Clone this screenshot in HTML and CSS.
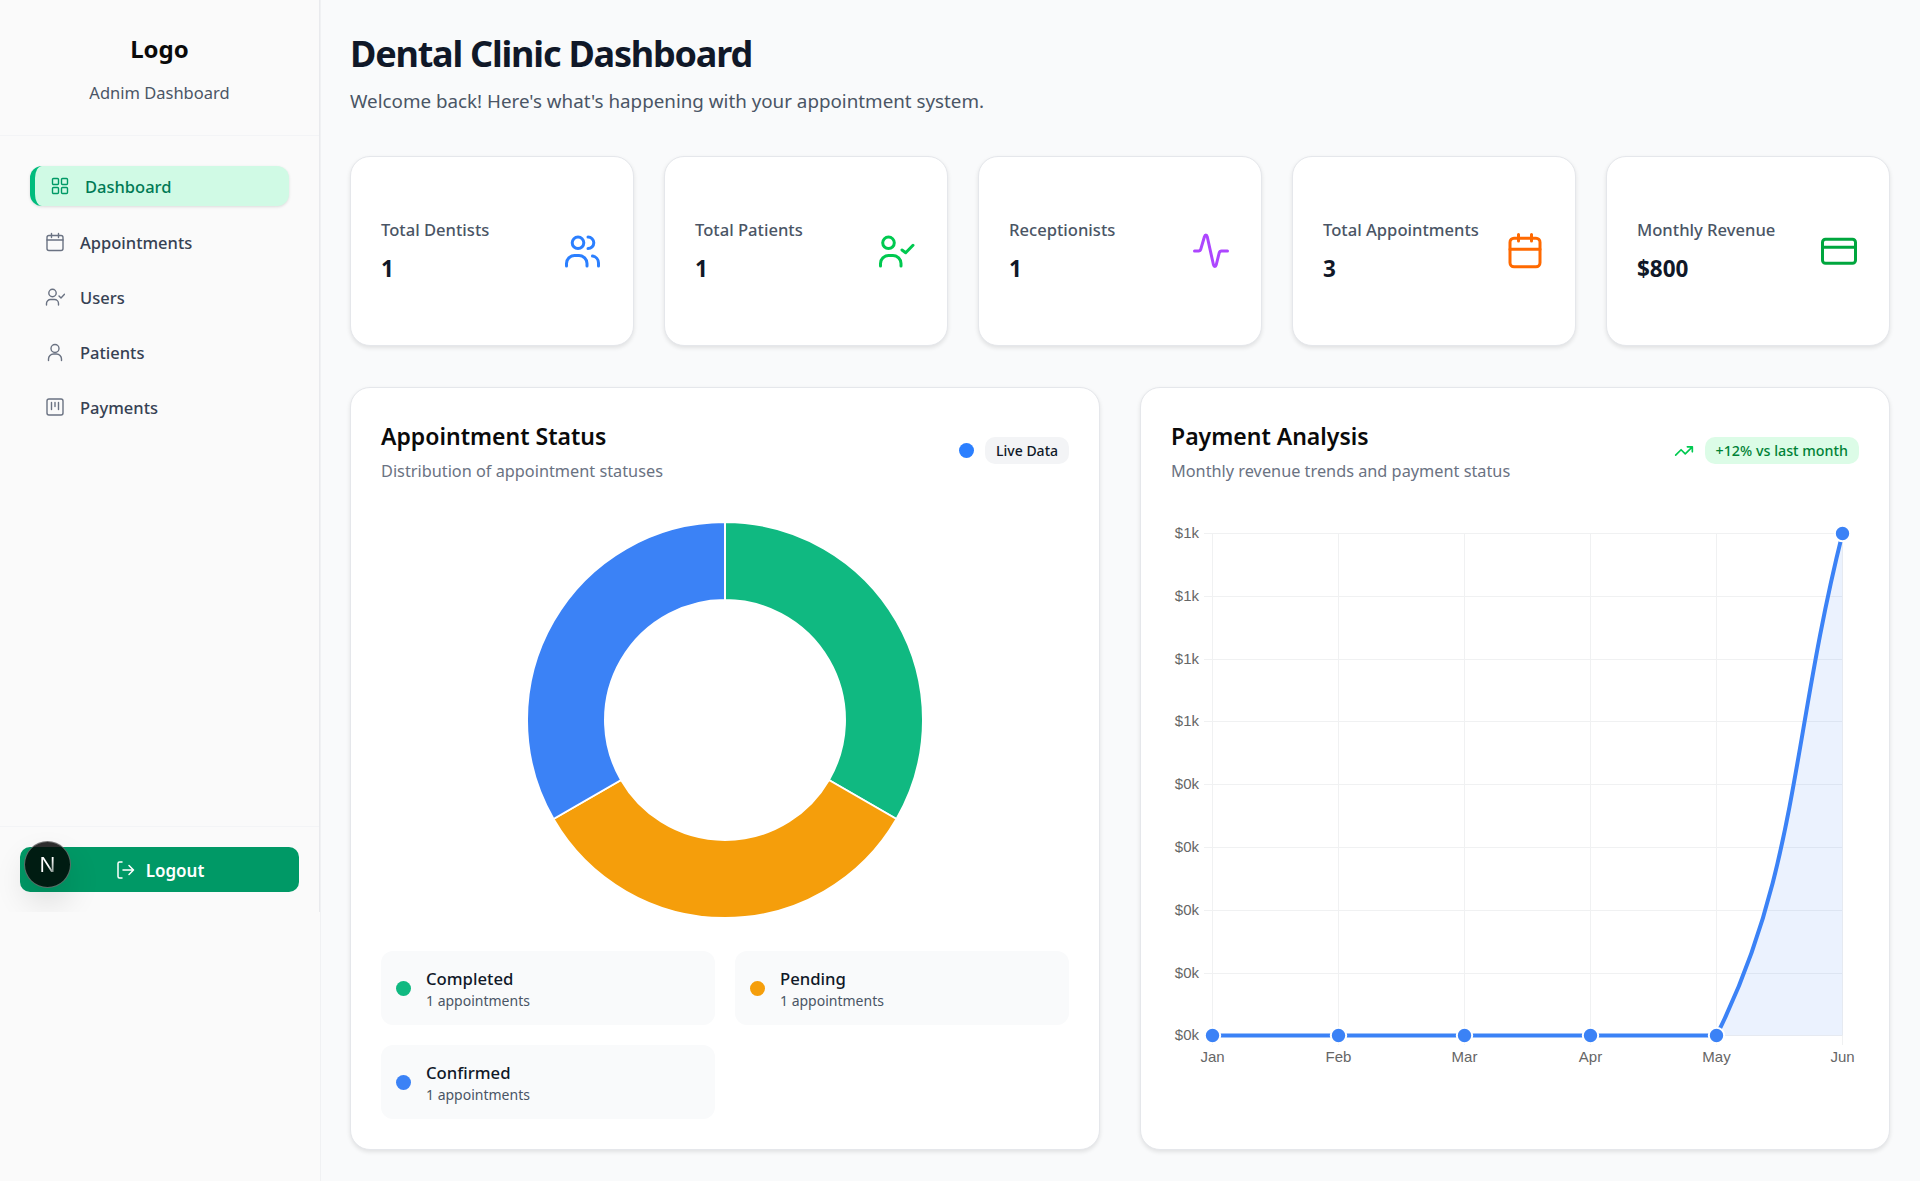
FILE: index.html
```html
<!DOCTYPE html>
<html lang="en">
<head>
  <meta charset="UTF-8" />
  <meta name="viewport" content="width=device-width, initial-scale=1.0"/>
  <title>Dental Clinic Dashboard</title>
  <link rel="stylesheet" href="styles.css">
</head>
<body>
  <aside class="sidebar-shell">
    <div class="sidebar">
      <div class="brand">
        <div class="brand-logo">Logo</div>
        <div class="brand-sub">Adnim Dashboard</div>
      </div>

      <nav class="nav">
        <a class="nav-item active" href="#">
          <svg class="nav-icon" viewBox="0 0 20 20"><rect x="2.5" y="2.5" width="6" height="6" rx="1"/><rect x="11.5" y="2.5" width="6" height="6" rx="1"/><rect x="2.5" y="11.5" width="6" height="6" rx="1"/><rect x="11.5" y="11.5" width="6" height="6" rx="1"/></svg>
          Dashboard
        </a>
        <a class="nav-item" href="#">
          <svg class="nav-icon" viewBox="0 0 20 20"><rect x="2" y="3.5" width="16" height="15" rx="2"/><path d="M6.5 1.5v4M13.5 1.5v4M2 8h16"/></svg>
          Appointments
        </a>
        <a class="nav-item" href="#">
          <svg class="nav-icon" viewBox="0 0 20 20"><circle cx="7.5" cy="6" r="3.7"/><path d="M1.5 18v-1.5a4 4 0 0 1 4-4h4a4 4 0 0 1 4 4V18M14 9l2 2 3.5-3.8"/></svg>
          Users
        </a>
        <a class="nav-item" href="#">
          <svg class="nav-icon" viewBox="0 0 20 20"><circle cx="10" cy="6.5" r="4"/><path d="M3.5 18.5v-1.5a5 5 0 0 1 5-5h3a5 5 0 0 1 5 5v1.5"/></svg>
          Patients
        </a>
        <a class="nav-item" href="#">
          <svg class="nav-icon" viewBox="0 0 20 20"><rect x="2" y="2" width="16" height="16" rx="2"/><path d="M6.5 5.5v7M10 5.5v4M13.5 5.5v7"/></svg>
          Payments
        </a>
      </nav>

      <div class="sidebar-footer">
        <button class="logout">
          <svg class="logout-icon" viewBox="0 0 20 20"><path d="M7 2H4.500A1.500 1.500 0 0 0 3 3.500v13A1.500 1.500 0 0 0 4.500 18H7M8 10h10.500M14 5.500l4.500 4.500-4.500 4.500"/></svg>
          Logout
        </button>
      </div>

      <div class="dev-badge"><span>N</span></div>
    </div>
  </aside>

  <main class="main">
    <header class="page-head">
      <h1>Dental Clinic Dashboard</h1>
      <p>Welcome back! Here's what's happening with your appointment system.</p>
    </header>

    <section class="stats">
      <div class="stat-card">
        <div>
          <div class="stat-label">Total Dentists</div>
          <div class="stat-value">1</div>
        </div>
        <svg class="stat-icon icon-blue" viewBox="0 0 36 36"><circle cx="13" cy="9.800" r="5.800"/><path d="M23 4a5.800 5.800 0 0 1 0 11.600M1.500 33v-2.500a8 8 0 0 1 8-8h4.500a8 8 0 0 1 8 8V33M27.500 23a7 7 0 0 1 6 7v3"/></svg>
      </div>
      <div class="stat-card">
        <div>
          <div class="stat-label">Total Patients</div>
          <div class="stat-value">1</div>
        </div>
        <svg class="stat-icon icon-green" viewBox="0 0 36 36"><circle cx="9.500" cy="9.800" r="5.800"/><path d="M1.500 33v-2.500a8 8 0 0 1 8-8h4.500a8 8 0 0 1 8 8V33M23 17l3.700 2.800 7.300-7.500"/></svg>
      </div>
      <div class="stat-card">
        <div>
          <div class="stat-label">Receptionists</div>
          <div class="stat-value">1</div>
        </div>
        <svg class="stat-icon icon-purple" viewBox="0 0 36 36"><path d="M1.500 18h4c1 0 2-.7 2.300-1.800L11.500 3.500c.5-2 2.200-2 2.700 0L20.500 32c.5 2 2.200 2 2.700 0l3-12.200c.3-1.100 1.200-1.800 2.300-1.800h6"/></svg>
      </div>
      <div class="stat-card">
        <div>
          <div class="stat-label">Total Appointments</div>
          <div class="stat-value">3</div>
        </div>
        <svg class="stat-icon icon-orange" viewBox="0 0 36 36"><rect x="3" y="5.200" width="30" height="28.600" rx="4"/><path d="M11.500 1.500V8M24.500 1.500V8M3 16.300h30"/></svg>
      </div>
      <div class="stat-card">
        <div>
          <div class="stat-label">Monthly Revenue</div>
          <div class="stat-value">$800</div>
        </div>
        <svg class="stat-icon icon-dark-green" viewBox="0 0 36 36"><rect x="1.500" y="6.200" width="33" height="24" rx="3"/><path d="M1.500 14.300h33"/></svg>
      </div>
    </section>

    <section class="charts">
      <div class="chart-card">
        <div class="chart-head">
          <div>
            <h2>Appointment Status</h2>
            <p>Distribution of appointment statuses</p>
          </div>
          <div class="chart-tag">
            <span class="tag-dot"></span>
            <span class="pill">Live Data</span>
          </div>
        </div>

        <div class="donut-wrap">
          <svg class="donut" viewBox="0 0 400 400" width="400" height="400">
            <path fill="#10b981" d="M200 2A198 198 0 0 1 371.500 299L303.900 260A120 120 0 0 0 200 80Z"/>
            <path fill="#f59e0b" d="M371.500 299A198 198 0 0 1 28.500 299L96.100 260A120 120 0 0 0 303.900 260Z"/>
            <path fill="#3b82f6" d="M28.500 299A198 198 0 0 1 200 2L200 80A120 120 0 0 0 96.100 260Z"/>
          </svg>
        </div>

        <div class="legend">
          <div class="legend-item">
            <span class="legend-dot dot-completed"></span>
            <div>
              <div class="legend-name">Completed</div>
              <div class="legend-sub">1 appointments</div>
            </div>
          </div>
          <div class="legend-item">
            <span class="legend-dot dot-pending"></span>
            <div>
              <div class="legend-name">Pending</div>
              <div class="legend-sub">1 appointments</div>
            </div>
          </div>
          <div class="legend-item">
            <span class="legend-dot dot-confirmed"></span>
            <div>
              <div class="legend-name">Confirmed</div>
              <div class="legend-sub">1 appointments</div>
            </div>
          </div>
        </div>
      </div>

      <div class="chart-card">
        <div class="chart-head">
          <div>
            <h2>Payment Analysis</h2>
            <p>Monthly revenue trends and payment status</p>
          </div>
          <div class="chart-tag">
            <svg class="trend-icon" viewBox="0 0 24 24"><path d="M22 7l-8.500 8.500-5-5L2 17M16 7h6v6"/></svg>
            <span class="pill pill-green">+12% vs last month</span>
          </div>
        </div>

        <svg class="line-chart" viewBox="0 0 688 616" width="688" height="616">
          <g class="grid">
            <path d="M33 30.500H671.500M33 93.500H671.500M33 156.500H671.500M33 218.500H671.500M33 281.500H671.500M33 344.500H671.500M33 407.500H671.500M33 470.500H671.500M33 532.500H671.500"/>
            <path d="M41.500 30.500V542M167.500 30.500V542M293.500 30.500V542M419.500 30.500V542M545.500 30.500V542M671.500 30.500V542"/>
          </g>
          <g class="axis-y">
            <text x="28" y="35">$1k</text>
            <text x="28" y="98">$1k</text>
            <text x="28" y="161">$1k</text>
            <text x="28" y="223">$1k</text>
            <text x="28" y="286">$0k</text>
            <text x="28" y="349">$0k</text>
            <text x="28" y="412">$0k</text>
            <text x="28" y="475">$0k</text>
            <text x="28" y="537">$0k</text>
          </g>
          <g class="axis-x">
            <text x="41.500" y="559">Jan</text>
            <text x="167.500" y="559">Feb</text>
            <text x="293.500" y="559">Mar</text>
            <text x="419.500" y="559">Apr</text>
            <text x="545.500" y="559">May</text>
            <text x="671.500" y="559">Jun</text>
          </g>
          <path class="area" d="M545.500 532.500C626.500 371 621 231 671.500 30.500V532.500Z"/>
          <path class="line" d="M41.500 532.500H545.500C626.500 371 621 231 671.500 30.500"/>
          <g class="points">
            <circle cx="41.500" cy="532.500" r="7.700"/>
            <circle cx="167.500" cy="532.500" r="7.700"/>
            <circle cx="293.500" cy="532.500" r="7.700"/>
            <circle cx="419.500" cy="532.500" r="7.700"/>
            <circle cx="545.500" cy="532.500" r="7.700"/>
            <circle cx="671.500" cy="30.500" r="7.700"/>
          </g>
        </svg>
      </div>
    </section>
  </main>
</body>
</html>
```

FILE: styles.css
```css
* { margin: 0; padding: 0; box-sizing: border-box; }

body {
  font-family: 'Noto Sans', sans-serif;
  background: #f9fafb;
  color: #101828;
  display: flex;
  min-height: 100vh;
}

/* Sidebar */
.sidebar-shell {
  width: 321px;
  flex-shrink: 0;
  background: #fafafa;
  border-right: 1px solid #f0f1f3;
}

.sidebar {
  position: relative;
  width: 320px;
  height: 912px;
  display: flex;
  flex-direction: column;
  overflow: hidden;
  border-right: 1px solid #e9eaed;
}

.brand {
  height: 136px;
  padding-top: 31px;
  text-align: center;
  border-bottom: 1px solid #f3f4f6;
}

.brand-logo {
  font-size: 24px;
  font-weight: 700;
  line-height: 36px;
  color: #0a0a0a;
}

.brand-sub {
  margin-top: 14px;
  font-size: 16.5px;
  line-height: 24px;
  color: #4a5565;
}

.nav {
  flex: 1;
  padding: 31px 30px 0;
  display: flex;
  flex-direction: column;
  gap: 15px;
}

.nav-item {
  height: 40px;
  display: flex;
  align-items: center;
  gap: 15px;
  padding-left: 15px;
  border-radius: 12px;
  font-size: 16.5px;
  font-weight: 500;
  color: #364153;
  text-decoration: none;
}

.nav-item.active {
  border-left: 5px solid #00bc7d;
  background: #d0fae5;
  color: #007a55;
  transform: translateY(-1px);
  box-shadow: 0 1px 3px rgba(0, 0, 0, 0.12);
}

.nav-icon {
  width: 20px;
  height: 20px;
  flex-shrink: 0;
  fill: none;
  stroke: #6a7282;
  stroke-width: 1.4;
  stroke-linecap: round;
  stroke-linejoin: round;
}

.active .nav-icon { stroke: #009966; }

.sidebar-footer {
  padding: 20px;
  border-top: 1px solid #f3f4f6;
}

.logout {
  width: 100%;
  height: 45px;
  display: flex;
  align-items: center;
  justify-content: center;
  gap: 11px;
  padding-top: 1px;
  background: #009966;
  color: #fff;
  border: none;
  border-radius: 10px;
  font-family: inherit;
  font-size: 17px;
  font-weight: 600;
  cursor: pointer;
}

.logout-icon {
  width: 20px;
  height: 20px;
  fill: none;
  stroke: #fff;
  stroke-width: 1.5;
  stroke-linecap: round;
  stroke-linejoin: round;
}

.dev-badge {
  position: absolute;
  left: 24px;
  top: 841px;
  width: 47px;
  height: 47px;
  display: flex;
  align-items: center;
  justify-content: center;
  border-radius: 50%;
  background: rgba(0, 0, 0, 0.82);
  border: 1px solid rgba(255, 255, 255, 0.35);
  box-shadow: 0 16px 32px rgba(0, 0, 0, 0.12);
}

.dev-badge span {
  font-family: 'Liberation Sans', sans-serif;
  font-size: 22px;
  background: linear-gradient(120deg, #fff 55%, rgba(255, 255, 255, 0.2));
  -webkit-background-clip: text;
  background-clip: text;
  color: transparent;
}

/* Main */
.main {
  flex: 1;
  min-width: 0;
  padding: 30px 30px 31px 29px;
}

.page-head h1 {
  font-size: 36px;
  font-weight: 700;
  line-height: 48px;
  letter-spacing: -1.2px;
  color: #101828;
}

.page-head p {
  margin-top: 9px;
  font-size: 18.8px;
  line-height: 28px;
  color: #4a5565;
}

.stats {
  margin-top: 41px;
  display: grid;
  grid-template-columns: repeat(5, 1fr);
  gap: 30px;
}

.stat-card {
  height: 190px;
  display: flex;
  align-items: center;
  justify-content: space-between;
  padding: 0 32px 0 30px;
  background: #fff;
  border: 1px solid #e5e7eb;
  border-radius: 20px;
  box-shadow: 0 2px 4px rgba(0, 0, 0, 0.1);
}

.stat-label {
  font-size: 16.6px;
  font-weight: 500;
  line-height: 24px;
  color: #4a5565;
}

.stat-value {
  margin-top: 11px;
  font-size: 22.5px;
  font-weight: 700;
  line-height: 32px;
  color: #101828;
}

.stat-icon {
  width: 36px;
  height: 36px;
  flex-shrink: 0;
  fill: none;
  stroke-width: 3;
  stroke-linecap: round;
  stroke-linejoin: round;
}

.icon-blue { stroke: #2b7fff; }
.icon-green { stroke: #00c950; }
.icon-purple { stroke: #ad46ff; }
.icon-orange { stroke: #ff6900; }
.icon-dark-green { stroke: #00a63e; }

.charts {
  margin-top: 41px;
  display: grid;
  grid-template-columns: 1fr 1fr;
  gap: 40px;
}

.chart-card {
  padding: 30px;
  background: #fff;
  border: 1px solid #e5e7eb;
  border-radius: 20px;
  box-shadow: 0 2px 4px rgba(0, 0, 0, 0.1);
}

.chart-head {
  display: flex;
  align-items: center;
  justify-content: space-between;
  margin-bottom: 20px;
}

.chart-head h2 {
  font-size: 23px;
  font-weight: 600;
  line-height: 36px;
  color: #0a0a0a;
}

.chart-head p {
  margin-top: 5px;
  font-size: 16.3px;
  line-height: 24px;
  color: #6a7282;
}

.chart-tag {
  display: flex;
  align-items: center;
  gap: 11px;
}

.tag-dot {
  width: 15px;
  height: 15px;
  border-radius: 50%;
  background: #2b7fff;
}

.pill {
  padding: 0 11px;
  height: 27px;
  line-height: 27px;
  border-radius: 10px;
  background: #f3f4f6;
  font-size: 14px;
  font-weight: 500;
  color: #101828;
}

.pill-green {
  background: #dcfce7;
  color: #008236;
  font-size: 14.3px;
}

.trend-icon {
  width: 20px;
  height: 20px;
  fill: none;
  stroke: #00c950;
  stroke-width: 2;
  stroke-linecap: round;
  stroke-linejoin: round;
}

.donut-wrap {
  display: flex;
  justify-content: center;
  padding-top: 17px;
}

.donut path {
  stroke: #fff;
  stroke-width: 2;
}

.legend {
  margin-top: 31px;
  display: grid;
  grid-template-columns: 1fr 1fr;
  gap: 20px;
}

.legend-item {
  display: flex;
  align-items: center;
  gap: 15px;
  padding: 16px 15px 14px;
  background: #f9fafb;
  border-radius: 12px;
}

.legend-dot {
  width: 15px;
  height: 15px;
  border-radius: 50%;
  flex-shrink: 0;
  transform: translateY(-1px);
}

.dot-completed { background: #10b981; }
.dot-pending { background: #f59e0b; }
.dot-confirmed { background: #3b82f6; }

.legend-name {
  font-size: 16.7px;
  font-weight: 500;
  line-height: 24px;
  color: #101828;
}

.legend-sub {
  font-size: 14px;
  line-height: 20px;
  color: #4a5565;
}

/* Line chart */
.line-chart {
  display: block;
}

.grid path {
  fill: none;
  stroke: #f0f1f2;
  stroke-width: 1;
}

.axis-y text,
.axis-x text {
  font-family: 'Liberation Sans', sans-serif;
  font-size: 15px;
  fill: #666;
}

.axis-y text { text-anchor: end; }
.axis-x text { text-anchor: middle; }

.area { fill: rgba(59, 130, 246, 0.1); }

.line {
  fill: none;
  stroke: #3b82f6;
  stroke-width: 4;
}

.points circle {
  fill: #3b82f6;
  stroke: #fff;
  stroke-width: 2;
}
```
